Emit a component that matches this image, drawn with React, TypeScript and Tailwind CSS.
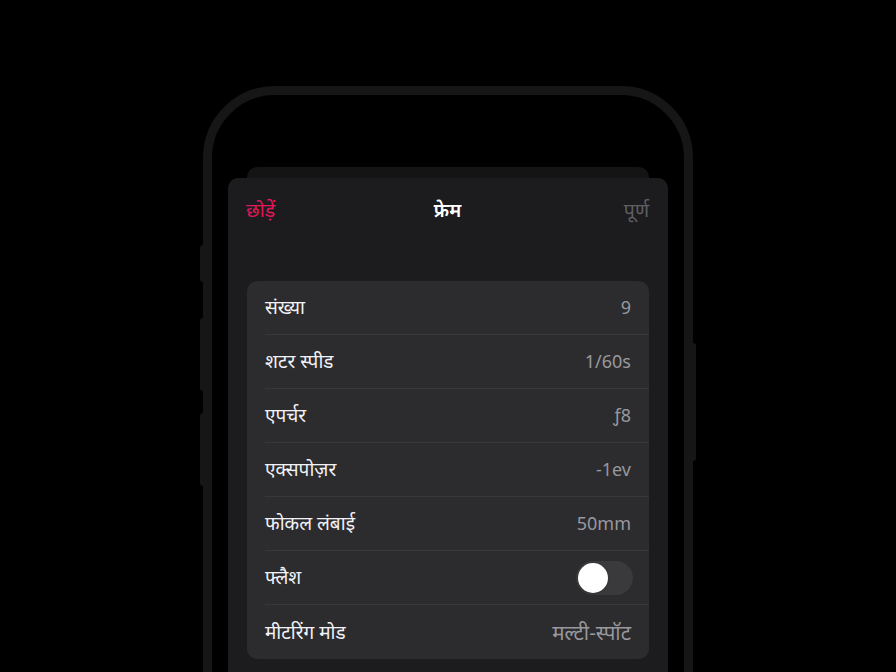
const rows: { label: string; value?: string; toggle?: boolean; deva?: boolean }[] = [
  { label: "संख्या", value: "9" },
  { label: "शटर स्पीड", value: "1/60s" },
  { label: "एपर्चर", value: "ƒ8" },
  { label: "एक्सपोज़र", value: "-1ev" },
  { label: "फोकल लंबाई", value: "50mm" },
  { label: "फ्लैश", toggle: true },
  { label: "मीटरिंग मोड", value: "मल्टी-स्पॉट", deva: true },
];

const font = { fontFamily: '"Noto Sans", "Liberation Sans", sans-serif' };

export default function App() {
  return (
    <div className="w-[896px] h-[672px] bg-black overflow-hidden flex justify-center" style={font}>
      <div className="relative mt-[86px] w-[490px] h-[700px] shrink-0">
        {/* side buttons */}
        <div className="absolute left-[-3px] top-[159px] w-[3px] h-[37px] bg-[#161616] rounded-l-sm" />
        <div className="absolute left-[-3px] top-[232px] w-[3px] h-[73px] bg-[#161616] rounded-l-sm" />
        <div className="absolute left-[-3px] top-[327px] w-[3px] h-[73px] bg-[#161616] rounded-l-sm" />
        <div className="absolute right-[-3px] top-[257px] w-[3px] h-[118px] bg-[#161616] rounded-r-sm" />

        <div className="h-full rounded-[72px] border-[9px] border-[#161616] bg-black pt-[72px]">
          <div className="mx-[35px] h-[11px] rounded-t-[10px] bg-[#141414]" />
          <div className="mx-[16px] h-[600px] rounded-t-[10px] bg-[#1c1c1e]">
            <div className="h-[64px] px-[18px] flex items-center justify-between">
              <span className="text-[#e3175d] text-[19.5px] w-[80px]">छोड़ें</span>
              <span className="text-white text-[19px] font-semibold">फ्रेम</span>
              <span className="text-[#5f5f63] text-[19.5px] w-[80px] text-right mr-[1px]">पूर्ण</span>
            </div>
            <div className="mt-[39px] mx-[19px] rounded-[10px] bg-[#2c2c2e] overflow-hidden">
              {rows.map((r, i) => (
                <div key={r.label} className="pl-[18px]">
                  <div
                    className={
                      "h-[54px] pr-[18px] flex items-center justify-between" +
                      (i < rows.length - 1 ? " border-b border-[#38383a]" : "")
                    }
                  >
                    <span className="text-[19px] text-[#f2f2f7]">{r.label}</span>
                    {r.toggle ? (
                      <div className="w-[57px] h-[34px] rounded-full bg-[#3a3a3c] p-[2px] mr-[-2px] flex items-center">
                        <div className="w-[30px] h-[30px] rounded-full bg-white shadow" />
                      </div>
                    ) : (
                      <span className={(r.deva ? "text-[20.5px]" : "text-[18px]") + " text-[#98989e]"}>{r.value}</span>
                    )}
                  </div>
                </div>
              ))}
            </div>
          </div>
        </div>
      </div>
    </div>
  );
}
